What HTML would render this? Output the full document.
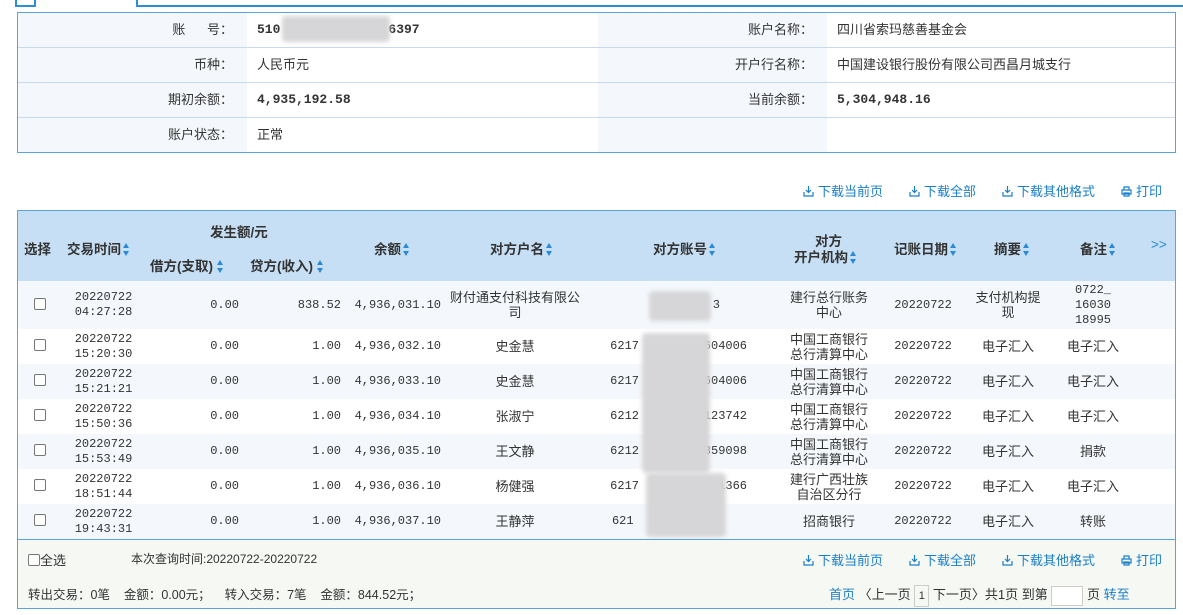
<!DOCTYPE html>
<html><head><meta charset="utf-8"><style>
*{margin:0;padding:0;box-sizing:border-box}
body{width:1183px;height:615px;background:#fff;font-family:"Liberation Sans","Noto Sans CJK SC",sans-serif;font-size:13px;color:#333;position:relative;overflow:hidden}
.a{position:absolute;white-space:nowrap}
.mono{font-family:"Liberation Mono","Noto Sans CJK SC",monospace;font-size:12px}
.info{position:absolute;left:17px;top:12px;width:1159px;height:141px;border:1px solid #5aa3dd;overflow:hidden}
.info .r{position:absolute;left:0;width:1157px;height:35px;border-bottom:1px solid #c7d9ea}
.lab{position:absolute;top:0;height:34px;background:#f4f8fc;line-height:34px;text-align:right;padding-right:14px}
.val{position:absolute;top:0;height:34px;line-height:34px}
.b{font-weight:bold;font-size:13px}
.lk{color:#1a7ec6;font-size:13px}
.dl{display:inline-block;width:11px;height:11px;vertical-align:-1px;margin-right:4px}
.grid{position:absolute;left:17px;top:210px;width:1159px;height:399px;border:1px solid #5aa3dd}
.hd{position:absolute;left:0;top:0;width:1157px;height:70px;background:#c6dff4;font-weight:bold;color:#333;font-size:13.5px}
.sort{display:inline-block;width:6px;height:13px;vertical-align:-2px;margin-left:2px}
table{position:absolute;left:0;top:70px;border-collapse:collapse;table-layout:fixed;width:1157px}
td{text-align:center;vertical-align:middle;line-height:15px;padding:0;overflow:hidden}
tr{height:35px}
tr.l{background:#f4f8fc}
.rt{text-align:right;padding-right:4px}
.acc{text-align:right;padding-right:22px}
.cb{display:inline-block;width:12px;height:12px;border:1px solid #777;border-radius:2px;background:#fff}
.blur{position:absolute;background:#d6d6d8;filter:blur(2px);border-radius:4px}
.foot{position:absolute;left:0;top:328px;width:1157px;height:69px;background:#f6f8f4;border-top:1px solid #5aa3dd}
</style></head><body>
<div class="a" style="left:15px;top:0;width:21px;height:7px;border:2px solid #2d8ed8;border-top:none"></div>
<div class="a" style="left:136px;top:0;width:1050px;height:7px;border:2px solid #2d8ed8;border-top:none;border-right:none"></div>

<div class="info">
 <div class="r" style="top:0"><div class="lab" style="left:0;width:229px">账&nbsp;&nbsp;&nbsp;&nbsp;&nbsp;&nbsp;号：</div><div class="val mono b" style="left:239px">510<span style="display:inline-block;width:108px"></span>6397</div>
  <div class="lab" style="left:580px;width:229px">账户名称：</div><div class="val" style="left:819px">四川省索玛慈善基金会</div></div>
 <div class="r" style="top:35px"><div class="lab" style="left:0;width:229px">币种：</div><div class="val" style="left:239px">人民币元</div>
  <div class="lab" style="left:580px;width:229px">开户行名称：</div><div class="val" style="left:819px">中国建设银行股份有限公司西昌月城支行</div></div>
 <div class="r" style="top:70px"><div class="lab" style="left:0;width:229px">期初余额：</div><div class="val mono b" style="left:239px">4,935,192.58</div>
  <div class="lab" style="left:580px;width:229px">当前余额：</div><div class="val mono b" style="left:819px">5,304,948.16</div></div>
 <div class="r" style="top:105px;border-bottom:none"><div class="lab" style="left:0;width:229px">账户状态：</div><div class="val" style="left:239px">正常</div>
  <div class="lab" style="left:580px;width:229px;height:35px"></div></div>
 <div class="blur" style="left:264px;top:3px;width:108px;height:26px;background:#d6d6d8"></div>
</div>

<svg width="0" height="0" style="position:absolute"><defs>
<symbol id="dl" viewBox="0 0 11 11"><path d="M5.5 0v6M3 4l2.5 2.5L8 4M1 6v4h9V6" fill="none" stroke="#1a7ec6" stroke-width="1.2"/></symbol>
<symbol id="pr" viewBox="0 0 11 11"><path d="M3 1h5v3H3zM1 4h9v4H1zM3 7h5v3H3z" fill="none" stroke="#1a7ec6" stroke-width="1.2"/></symbol>
<symbol id="so" viewBox="0 0 6 13"><path d="M3 0L6 5H0zM3 13L0 8h6z" fill="#2a8ad6"/></symbol>
</defs></svg>

<div class="a lk" style="left:803px;top:181px"><svg class="dl"><use href="#dl"/></svg>下载当前页</div>
<div class="a lk" style="left:909px;top:181px"><svg class="dl"><use href="#dl"/></svg>下载全部</div>
<div class="a lk" style="left:1002px;top:181px"><svg class="dl"><use href="#dl"/></svg>下载其他格式</div>
<div class="a lk" style="left:1121px;top:181px"><svg class="dl"><use href="#pr"/></svg>打印</div>

<div class="grid">
 <div class="hd">
  <div class="a" style="left:6px;top:27px">选择</div>
  <div class="a" style="left:49px;top:27px">交易时间<svg class="sort"><use href="#so"/></svg></div>
  <div class="a" style="left:192px;top:10px">发生额/元</div>
  <div class="a" style="left:132px;top:44px">借方(支取)<svg class="sort" style="margin-left:4px"><use href="#so"/></svg></div>
  <div class="a" style="left:232px;top:44px">贷方(收入)<svg class="sort" style="margin-left:4px"><use href="#so"/></svg></div>
  <div class="a" style="left:356px;top:27px">余额<svg class="sort"><use href="#so"/></svg></div>
  <div class="a" style="left:472px;top:27px">对方户名<svg class="sort"><use href="#so"/></svg></div>
  <div class="a" style="left:635px;top:27px">对方账号<svg class="sort"><use href="#so"/></svg></div>
  <div class="a" style="left:797px;top:19px">对方</div>
  <div class="a" style="left:776px;top:35px">开户机构<svg class="sort"><use href="#so"/></svg></div>
  <div class="a" style="left:876px;top:27px">记账日期<svg class="sort"><use href="#so"/></svg></div>
  <div class="a" style="left:976px;top:27px">摘要<svg class="sort"><use href="#so"/></svg></div>
  <div class="a" style="left:1062px;top:27px">备注<svg class="sort"><use href="#so"/></svg></div>
  <div class="a" style="left:1133px;top:26px;color:#2a8ad6;font-weight:normal">&gt;&gt;</div>
 </div>
 <table>
  <colgroup><col style="width:43px"><col style="width:85px"><col style="width:97px"><col style="width:102px"><col style="width:100px"><col style="width:140px"><col style="width:184px"><col style="width:120px"><col style="width:68px"><col style="width:102px"><col style="width:68px"><col style="width:48px"></colgroup>
  <tr class="l" style="height:48px"><td><span class="cb"></span></td><td class="mono">20220722<br>04:27:28</td><td class="mono rt">0.00</td><td class="mono rt">838.52</td><td class="mono rt">4,936,031.10</td><td>财付通支付科技有限公<br>司</td><td class="mono acc" style="padding-right:49px">3</td><td>建行总行账务<br>中心</td><td class="mono">20220722</td><td>支付机构提<br>现</td><td class="mono">0722_<br>16030<br>18995</td><td></td></tr>
  <tr><td><span class="cb"></span></td><td class="mono">20220722<br>15:20:30</td><td class="mono rt">0.00</td><td class="mono rt">1.00</td><td class="mono rt">4,936,032.10</td><td>史金慧</td><td class="mono acc">6217&nbsp;&nbsp;&nbsp;&nbsp;&nbsp;&nbsp;&nbsp;&nbsp;&nbsp;604006</td><td>中国工商银行<br>总行清算中心</td><td class="mono">20220722</td><td>电子汇入</td><td>电子汇入</td><td></td></tr>
  <tr class="l"><td><span class="cb"></span></td><td class="mono">20220722<br>15:21:21</td><td class="mono rt">0.00</td><td class="mono rt">1.00</td><td class="mono rt">4,936,033.10</td><td>史金慧</td><td class="mono acc">6217&nbsp;&nbsp;&nbsp;&nbsp;&nbsp;&nbsp;&nbsp;&nbsp;&nbsp;604006</td><td>中国工商银行<br>总行清算中心</td><td class="mono">20220722</td><td>电子汇入</td><td>电子汇入</td><td></td></tr>
  <tr><td><span class="cb"></span></td><td class="mono">20220722<br>15:50:36</td><td class="mono rt">0.00</td><td class="mono rt">1.00</td><td class="mono rt">4,936,034.10</td><td>张淑宁</td><td class="mono acc">6212&nbsp;&nbsp;&nbsp;&nbsp;&nbsp;&nbsp;&nbsp;&nbsp;&nbsp;123742</td><td>中国工商银行<br>总行清算中心</td><td class="mono">20220722</td><td>电子汇入</td><td>电子汇入</td><td></td></tr>
  <tr class="l"><td><span class="cb"></span></td><td class="mono">20220722<br>15:53:49</td><td class="mono rt">0.00</td><td class="mono rt">1.00</td><td class="mono rt">4,936,035.10</td><td>王文静</td><td class="mono acc">6212&nbsp;&nbsp;&nbsp;&nbsp;&nbsp;&nbsp;&nbsp;&nbsp;&nbsp;359098</td><td>中国工商银行<br>总行清算中心</td><td class="mono">20220722</td><td>电子汇入</td><td>捐款</td><td></td></tr>
  <tr><td><span class="cb"></span></td><td class="mono">20220722<br>18:51:44</td><td class="mono rt">0.00</td><td class="mono rt">1.00</td><td class="mono rt">4,936,036.10</td><td>杨健强</td><td class="mono acc">6217&nbsp;&nbsp;&nbsp;&nbsp;&nbsp;&nbsp;&nbsp;&nbsp;&nbsp;&nbsp;&nbsp;1366</td><td>建行广西壮族<br>自治区分行</td><td class="mono">20220722</td><td>电子汇入</td><td>电子汇入</td><td></td></tr>
  <tr class="l"><td><span class="cb"></span></td><td class="mono">20220722<br>19:43:31</td><td class="mono rt">0.00</td><td class="mono rt">1.00</td><td class="mono rt">4,936,037.10</td><td>王静萍</td><td class="mono acc" style="padding-right:49px">621&nbsp;&nbsp;&nbsp;&nbsp;&nbsp;&nbsp;&nbsp;&nbsp;&nbsp;&nbsp;&nbsp;1</td><td>招商银行</td><td class="mono">20220722</td><td>电子汇入</td><td>转账</td><td></td></tr>
 </table>
 <div class="blur" style="left:631px;top:80px;width:62px;height:30px"></div>
 <div class="blur" style="left:624px;top:122px;width:68px;height:140px"></div>
 <div class="blur" style="left:628px;top:262px;width:80px;height:64px"></div>
 <div class="foot">
  <div class="a" style="left:10px;top:10px"><span class="cb" style="vertical-align:-1px"></span>全选</div>
  <div class="a" style="left:113px;top:10px;font-size:12px">本次查询时间:20220722-20220722</div>
  <div class="a lk" style="left:785px;top:10px"><svg class="dl"><use href="#dl"/></svg>下载当前页</div>
  <div class="a lk" style="left:891px;top:10px"><svg class="dl"><use href="#dl"/></svg>下载全部</div>
  <div class="a lk" style="left:984px;top:10px"><svg class="dl"><use href="#dl"/></svg>下载其他格式</div>
  <div class="a lk" style="left:1103px;top:10px"><svg class="dl"><use href="#pr"/></svg>打印</div>
  <div class="a" style="left:10px;top:44px;font-size:12.5px">转出交易：0笔&nbsp;&nbsp;&nbsp;&nbsp;金额：0.00元；&nbsp;&nbsp;&nbsp;&nbsp;转入交易：7笔&nbsp;&nbsp;&nbsp;&nbsp;金额：844.52元；</div>
  <div class="a" style="left:811px;top:44px"><span class="lk">首页</span> 〈上一页 <span style="display:inline-block;width:15px;height:22px;border:1px solid #ccc;text-align:center;line-height:20px;font-size:11px;vertical-align:middle">1</span> 下一页〉共1页 到第 <span style="display:inline-block;width:32px;height:20px;border:1px solid #ccc;background:#fff;vertical-align:middle"></span> 页 <span class="lk">转至</span></div>
 </div>
</div>
</body></html>
